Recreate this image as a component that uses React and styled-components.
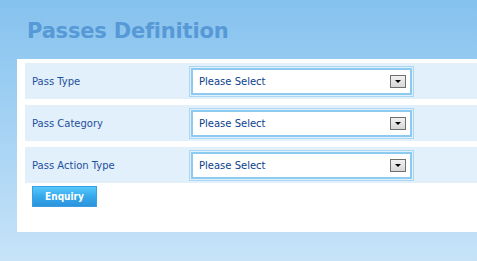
import React from "react";
import styled, { createGlobalStyle } from "styled-components";

const GlobalStyle = createGlobalStyle`
    html, body {
        margin: 0;
        padding: 0;
        overflow: hidden;
    }
    body {
        font-family: "DejaVu Sans", Verdana, sans-serif;
    }
`;

const Page = styled.div`
    width: 477px;
    height: 261px;
    background: linear-gradient(180deg, #85c2ee 0%, #a6d3f4 50%, #c7e3f8 100%);
    overflow: hidden;
`;

const Title = styled.h1`
    margin: 0;
    padding: 18px 0 0 27px;
    height: 59px;
    box-sizing: border-box;
    font-family: "DejaVu Sans", Verdana, sans-serif;
    font-weight: bold;
    font-size: 21px;
    line-height: 26px;
    color: #5799d6;
    letter-spacing: -0.2px;
`;

const Panel = styled.div`
    margin-left: 17px;
    width: 480px;
    height: 173px;
    background: #ffffff;
    padding: 4px 0 0 8px;
    box-sizing: border-box;
    display: flex;
    flex-direction: column;
    gap: 6px;
`;

const Row = styled.div`
    height: 36px;
    background: #e1f0fa;
    display: flex;
    align-items: center;
    padding-left: 7px;
`;

const Label = styled.div`
    width: 157px;
    font-size: 10px;
    color: #1f4f9f;
`;

const SelectFrame = styled.div`
    border: 1px solid #a9d6f2;
    padding: 1px;
`;

const SelectBox = styled.div`
    width: 207px;
    height: 23px;
    border: 2px solid #8ccaef;
    background: #ffffff;
    display: flex;
    align-items: center;
    justify-content: space-between;
    padding: 0 4px 0 6px;
    font-size: 10px;
    color: #0b3f8c;
`;

const Arrow = styled.div`
    width: 14px;
    height: 11px;
    border: 1px solid #6f6f6f;
    background: linear-gradient(180deg, #f2f2f2 0%, #d6d6d6 100%);
    display: flex;
    align-items: center;
    justify-content: center;
`;

const Button = styled.button`
    margin: -3px 0 0 7px;
    width: 65px;
    height: 21px;
    border: 1px solid #3a9ee2;
    background: linear-gradient(180deg, #58c8fb 0%, #36a9ec 50%, #2b93dc 100%);
    color: #ffffff;
    font-family: "DejaVu Sans Condensed", "Liberation Sans", sans-serif;
    font-weight: bold;
    font-size: 10px;
    padding: 0;
    cursor: pointer;
    align-self: flex-start;
`;

const fields = ["Pass Type", "Pass Category", "Pass Action Type"];

const DownArrow = () => (
    <Arrow>
        <svg width="8" height="5" viewBox="0 0 8 5">
            <polygon points="1,1 7,1 4,4" fill="#000" />
        </svg>
    </Arrow>
);

export default function App() {
    return (
        <Page>
            <GlobalStyle />
            <Title>Passes Definition</Title>
            <Panel>
                {fields.map((f) => (
                    <Row key={f}>
                        <Label>{f}</Label>
                        <SelectFrame>
                            <SelectBox>
                                <span>Please Select</span>
                                <DownArrow />
                            </SelectBox>
                        </SelectFrame>
                    </Row>
                ))}
                <Button>Enquiry</Button>
            </Panel>
        </Page>
    );
}
